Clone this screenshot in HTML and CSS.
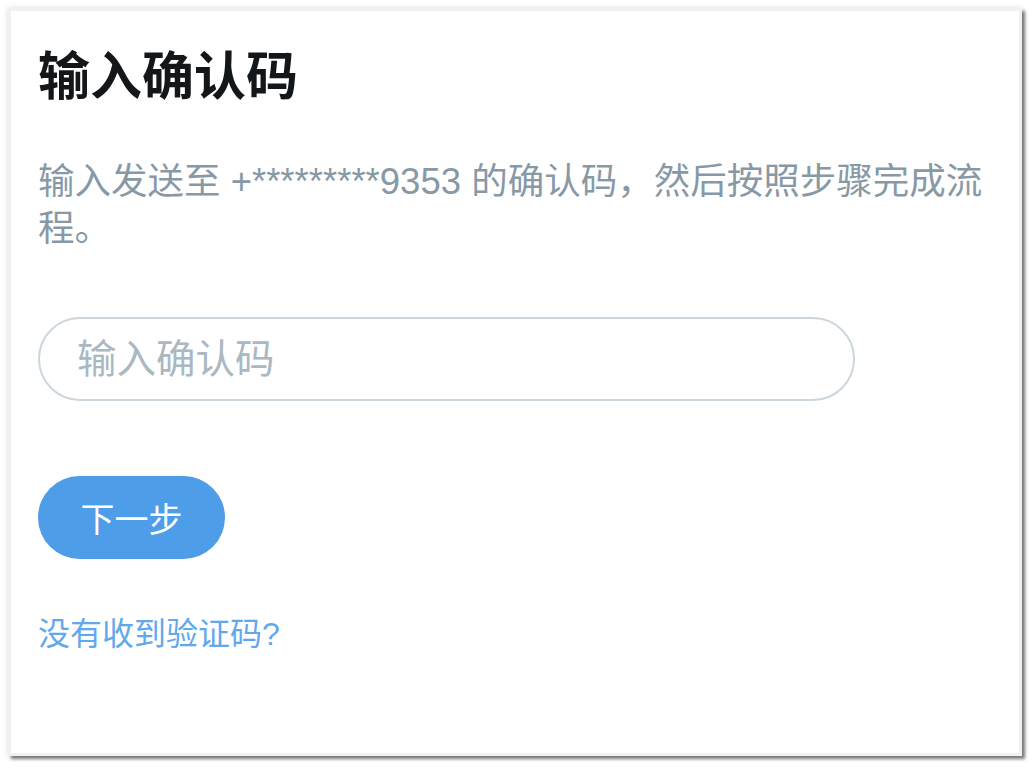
FILE: index.html
```html
<!DOCTYPE html>
<html lang="zh-CN">
<head>
<meta charset="utf-8">
<title>输入确认码</title>
<link rel="stylesheet" href="styles.css">
</head>
<body>
<div class="window">
  <div class="content">
    <h1 class="title">输入确认码</h1>
    <p class="desc">输入发送至 +*********9353 的确认码，然后按照步骤完成流程。</p>
    <input class="code-input" type="text" placeholder="输入确认码">
    <button class="next-btn" type="button">下一步</button>
    <a class="resend" href="#">没有收到验证码?</a>
  </div>
</div>
</body>
</html>
```

FILE: styles.css
```css
html, body {
  margin: 0;
  padding: 0;
  background: #ffffff;
}

body {
  font-family: "Liberation Sans", "Noto Sans CJK SC", sans-serif;
  width: 1033px;
  height: 769px;
  overflow: hidden;
}

.window {
  box-sizing: border-box;
  margin: 8px 0 0 8px;
  width: 1014px;
  height: 748px;
  border: 3px solid #eef2f2;
  background: #ffffff;
  box-shadow: 3px 3px 3px rgba(0, 0, 0, 0.5), 0 0 6px rgba(0, 0, 0, 0.14);
}

.content {
  display: flex;
  flex-direction: column;
  align-items: flex-start;
  padding: 35px 22px 0 27px;
}

.title {
  margin: 0;
  font-size: 52px;
  line-height: 62px;
  font-weight: 700;
  color: #14171a;
}

.desc {
  margin: 50px 0 0 0;
  font-size: 36.5px;
  line-height: 47px;
  color: #8899a6;
}

.code-input {
  box-sizing: border-box;
  margin-top: 65px;
  width: 817px;
  height: 84px;
  border: 2px solid #ccd6dd;
  border-radius: 42px;
  padding: 0 0 0 37px;
  font-family: inherit;
  font-size: 39.5px;
  color: #14171a;
  background: #ffffff;
  outline: none;
}

.code-input::placeholder {
  color: #aab8c2;
}

.next-btn {
  box-sizing: border-box;
  margin-top: 75px;
  width: 187px;
  height: 83px;
  border: none;
  border-radius: 42px;
  background: #4d9de8;
  color: #ffffff;
  font-family: inherit;
  font-size: 34px;
  padding: 0;
}

.resend {
  margin-top: 55px;
  font-size: 32px;
  line-height: 40px;
  color: #62a8ec;
  text-decoration: none;
}
```
